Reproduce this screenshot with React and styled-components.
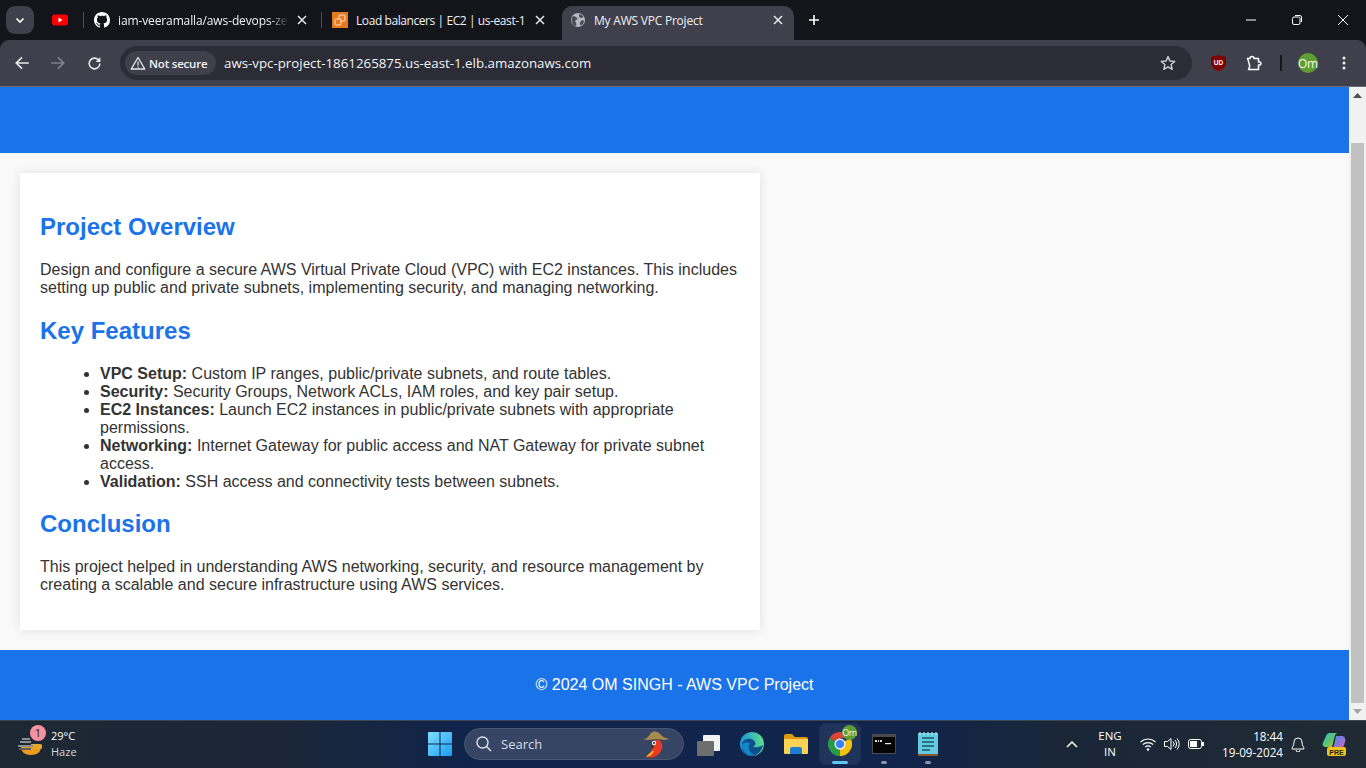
import React from "react";
import styled, { createGlobalStyle } from "styled-components";

const Global = createGlobalStyle`
  html, body { margin: 0; padding: 0; height: 768px; overflow: hidden; }
  * { box-sizing: border-box; }
  #root { width: 1366px; height: 768px; }
`;
const uiFont = `"Open Sans", "Noto Sans", "Liberation Sans", sans-serif`;

const Frame = styled.div`
  width: 1366px; height: 768px; display: flex; flex-direction: column; overflow: hidden;
  font-family: ${uiFont}; background: #14151b;
`;
/* ---- tab strip ---- */
const TabStrip = styled.div`
  height: 40px; flex: none; display: flex; align-items: flex-end; background: #14151b; padding-left: 6px; color: #f1f1f3;
`;
const TabSearch = styled.button`
  width: 28px; height: 28px; margin-bottom: 6px; border: 0; padding: 0; border-radius: 9px; background: #3f404c;
  display: flex; align-items: center; justify-content: center; flex: none; margin-right: 12px;
`;
const PinnedTab = styled.div`
  width: 37px; height: 34px; display: flex; align-items: center; padding-bottom: 6px; padding-left: 6px; flex: none;
`;
const Divider = styled.div`
  width: 1px; height: 16px; margin-bottom: 12px; background: #4d4e5a; flex: none;
`;
const Tab = styled.div`
  height: 34px; width: ${p => p.$w}px; flex: none; display: flex; align-items: center;
  padding: 0 ${p => p.$pr}px 6px ${p => (p.$active ? 9 : 10)}px; gap: ${p => (p.$active ? 9 : 8)}px;
  background: ${p => (p.$active ? "#3f404c" : "transparent")};
  border-radius: ${p => (p.$active ? "10px 10px 0 0" : "0")};
  font-size: 12px; color: #eef0f3;
`;
const TabTitle = styled.span`
  flex: 1; white-space: nowrap; overflow: hidden; letter-spacing: ${p => p.$ls ?? -0.22}px;
  ${p => p.$fade && `mask-image: linear-gradient(90deg, #000 88%, transparent 100%);`}
`;
const NewTab = styled.div`
  width: 40px; height: 34px; flex: none; display: flex; align-items: center; justify-content: center; padding-bottom: 6px;
`;
const WindowControls = styled.div`
  margin-left: auto; display: flex; height: 40px; align-items: center;
`;
const WinBtn = styled.div`
  width: 46px; height: 40px; display: flex; align-items: center; justify-content: center;
`;
/* ---- toolbar ---- */
const Toolbar = styled.div`
  height: 47px; flex: none; display: flex; align-items: center; background: #3f404c; border-radius: 9px 9px 0 0; border-bottom: 1px solid #6a6b75;
  padding: 0 0 0 4px;
`;
const NavBtn = styled.div`
  width: 36px; height: 34px; display: flex; align-items: center; justify-content: center; flex: none;
`;
const Omnibox = styled.div`
  width: 1072px; height: 34px; margin-left: 8px; flex: none; border-radius: 17px; background: #2b2c35; display: flex; align-items: center; padding: 0 16px 0 5px; color: #f2f3f5;
`;
const SecureChip = styled.div`
  height: 24px; width: 91px; border-radius: 12px; background: #3f404c; display: flex; align-items: center; gap: 3px; padding-left: 5px;
  font-size: 11.5px; font-weight: 600; white-space: nowrap; letter-spacing: -0.2px; flex: none;
`;
const UrlText = styled.span`
  margin-left: 8px; font-size: 13.3px; white-space: nowrap; flex: 1;
`;
const Tools = styled.div`
  display: flex; align-items: center; margin-left: 8px;
`;
const ToolBtn = styled.div`
  width: 36px; height: 34px; display: flex; align-items: center; justify-content: center; flex: none;
`;
const ToolSep = styled.div`
  width: 2px; height: 16px; background: #16171c; margin: 0 8px; flex: none;
`;
const Avatar = styled.div`
  width: ${p => p.$s || 20}px; height: ${p => p.$s || 20}px; border-radius: 50%; background: #5f9e34; color: #f2f7ec; font-size: ${p => p.$f || 12}px; display: flex; align-items: center; justify-content: center; flex: none; letter-spacing: -0.3px;
`;
/* ---- viewport ---- */
const Viewport = styled.div`
  flex: 1; min-height: 0; display: flex; background: #f9f9f9; overflow: hidden;
`;
const Page = styled.div`
  flex: 1; min-width: 0; display: flex; flex-direction: column; font-family: "Liberation Sans", Arial, sans-serif; color: #333; font-size: 16px; line-height: 18px;
`;
const Hero = styled.div`
  height: 66px; background: #1a73e8; flex: none;
`;
const Main = styled.div`
  padding: 20px; flex: none;
`;
const Card = styled.section`
  width: 740px; padding: 20px; background: #fff; box-shadow: 0 0 10px rgba(0,0,0,0.1);
`;
const Heading = styled.h2`
  margin: 19.8px 0 20.4px; font-size: 24px; line-height: 27.6px; font-weight: 700; color: #1a73e8;
`;
const Para = styled.p`
  margin: 16px 0;
`;
const List = styled.ul`
  margin: 19.8px 0; padding-left: 60px;
`;
const Foot = styled.footer`
  flex: 1; background: #1a73e8; color: #fff; text-align: center; padding-top: 26px;
`;
const Scrollbar = styled.div`
  width: 17px; flex: none; background: #f1f1f1; display: flex; flex-direction: column;
`;
const ScrollArrow = styled.div`
  height: 17px; flex: none; display: flex; align-items: center; justify-content: center;
`;
const ScrollTrack = styled.div`
  flex: 1; padding: 39px 2px 0; display: flex;
`;
const ScrollThumb = styled.div`
  flex: 1; background: #c1c1c1;
`;
/* ---- taskbar ---- */
const Taskbar = styled.div`
  height: 48px; flex: none; display: flex; align-items: center; color: #fff; border-top: 1px solid #3c4650; padding-bottom: 1px;
  background: linear-gradient(90deg, #1d2833 0%, #1b2738 20%, #10244c 35%, #10244c 65%, #1a2738 78%, #1f2a33 100%);
`;
const Weather = styled.div`
  width: 428px; flex: none; display: flex; align-items: center; padding-left: 18px; gap: 9px; position: relative; font-size: 11px; line-height: 16px;
`;
const WeatherBadge = styled.div`
  position: absolute; left: 30px; top: -3px; width: 16px; height: 16px; border-radius: 50%; background: #f7919d; color: #222; font-size: 11px; display: flex; align-items: center; justify-content: center;
`;
const WeatherText = styled.div`
  display: flex; flex-direction: column;
`;
const Dim = styled.span`
  color: #d4d8dc;
`;
const Apps = styled.div`
  display: flex; align-items: center; flex: none;
`;
const AppSlot = styled.div`
  width: ${p => p.$w || 44}px; height: 40px; display: flex; align-items: center; justify-content: center; position: relative; flex: none; border-radius: 5px;
  ${p => p.$active && `background: rgba(255,255,255,0.07); outline: 1px solid rgba(255,255,255,0.05); width: 40px; margin: 0 2px;`}
`;
const RunDot = styled.div`
  position: absolute; bottom: 0; left: 50%; transform: translateX(-50%); height: 3px; border-radius: 2px;
  width: ${p => (p.$active ? 16 : 6)}px; background: ${p => (p.$active ? "#5ec5f5" : "#8c93a3")};
`;
const SearchBox = styled.div`
  width: 220px; height: 32px; margin: 0 2px 0 12px; border-radius: 16px; background: #374565; border: 1px solid #4a5674; display: flex; align-items: center; padding-left: 11px; gap: 9px; font-size: 13px; color: #d6dbe6; flex: none; position: relative;
`;
const ParrotWrap = styled.div`
  position: absolute; right: 12px; top: 1px;
`;
const AppBadge = styled.div`
  position: absolute; right: 3px; top: 1px;
`;
const Tray = styled.div`
  margin-left: 110px; display: flex; align-items: center; flex: none;
`;
const TraySlot = styled.div`
  width: ${p => p.$w || 24}px; display: flex; align-items: center; justify-content: center; flex: none; margin-left: ${p => p.$ml || 0}px;
`;
const Lang = styled.div`
  width: 48px; margin-left: 2px; text-align: center; font-size: 11.5px; line-height: 16px;
`;
const Clock = styled.div`
  width: 75px; text-align: right; font-size: 11.7px; line-height: 16px; flex: none; white-space: nowrap;
`;

/* ---- drawn icons ---- */
const Chev = () => <svg width="12" height="12" viewBox="0 0 12 12"><path d="M2.5 4.5 6 8l3.5-3.5" fill="none" stroke="#fff" strokeWidth="1.6" /></svg>;
const YouTube = () => <svg width="16" height="12" viewBox="0 0 16 12"><rect width="16" height="11" y=".5" rx="3" fill="#f00" /><path d="M6.5 3.5v5l4-2.5z" fill="#fff" /></svg>;
const GitHub = () => <svg width="16" height="16" viewBox="0 0 16 16"><path fill="#fff" d="M8 0C3.58 0 0 3.58 0 8c0 3.54 2.29 6.53 5.47 7.59.4.07.55-.17.55-.38 0-.19-.01-.82-.01-1.49-2.01.37-2.53-.49-2.69-.94-.09-.23-.48-.94-.82-1.13-.28-.15-.68-.52-.01-.53.63-.01 1.08.58 1.23.82.72 1.21 1.87.87 2.33.66.07-.52.28-.87.51-1.07-1.78-.2-3.64-.89-3.64-3.95 0-.87.31-1.59.82-2.15-.08-.2-.36-1.02.08-2.12 0 0 .67-.21 2.2.82.64-.18 1.32-.27 2-.27s1.36.09 2 .27c1.53-1.04 2.2-.82 2.2-.82.44 1.1.16 1.92.08 2.12.51.56.82 1.27.82 2.15 0 3.07-1.87 3.75-3.65 3.95.29.25.54.73.54 1.48 0 1.07-.01 1.93-.01 2.2 0 .21.15.46.55.38A8.01 8.01 0 0 0 16 8c0-4.42-3.58-8-8-8z" /></svg>;
const AwsIcon = () => <svg width="16" height="16" viewBox="0 0 16 16"><rect width="16" height="16" fill="#e8791c" /><rect x="7" y="3" width="6" height="6" rx="1" fill="none" stroke="#fbe3cc" strokeWidth="1" /><rect x="3" y="7" width="6" height="6" rx="1" fill="#e8791c" stroke="#fbe3cc" strokeWidth="1" /></svg>;
const Globe = () => <svg width="14" height="14" viewBox="0 0 14 14"><circle cx="7" cy="7" r="7" fill="#b7b9c0" /><path d="M2 3c2 0 3 1 4 2s0 2-1 2-1 2 0 3 0 3-1 3C2 12 0 9 1 5zM9 1c1 1 2 1 3 2s-1 2-2 2-2-1-2-2 0-2 1-2zM10 8c1-1 3-1 3 0s-1 3-2 4-2 0-2-1 0-2 1-3z" fill="#4a4b57" /></svg>;
const Close = ({ c = "#e8e9ec" }) => <svg width="10" height="10" viewBox="0 0 10 10" style={{ flex: "none" }}><path d="M1 1l8 8M9 1 1 9" stroke={c} strokeWidth="1.5" /></svg>;
const Plus = () => <svg width="12" height="12" viewBox="0 0 12 12"><path d="M6 1v10M1 6h10" stroke="#fff" strokeWidth="1.6" /></svg>;
const Back = ({ c = "#e8e9ec", flip }) => <svg width="16" height="16" viewBox="0 0 14 14" style={flip ? { transform: "scaleX(-1)" } : undefined}><path d="M13 7H2M7 2 2 7l5 5" fill="none" stroke={c} strokeWidth="1.5" /></svg>;
const Reload = () => <svg width="15" height="15" viewBox="0 0 14 14"><path d="M12 7a5 5 0 1 1-1.5-3.6L12 5" fill="none" stroke="#e8e9ec" strokeWidth="1.5" /><path d="M12.5 1v4.5H8z" fill="#e8e9ec" /></svg>;
const Warn = () => <svg width="16" height="14" viewBox="0 0 16 14"><path d="M8 1.5 1.2 13h13.6z" fill="none" stroke="#e8e9ec" strokeWidth="1.3" strokeLinejoin="round" /><path d="M8 5.5v4M8 10.5v1.3" stroke="#e8e9ec" strokeWidth="1.2" /></svg>;
const Star = () => <svg width="16" height="16" viewBox="0 0 16 16"><path d="M8 1.6 9.9 6l4.8.4-3.6 3.2 1.1 4.7L8 11.8l-4.2 2.5 1.1-4.7L1.3 6.4 6.1 6z" fill="none" stroke="#cfd0d5" strokeWidth="1.4" strokeLinejoin="round" /></svg>;
const Shield = () => <svg width="15" height="16" viewBox="0 0 15 16"><path d="M7.5 0 15 2v6c0 4-3.5 6.5-7.5 8C3.500 14.500 0 12 0 8V2z" fill="#800000" /><text x="7.500" y="10" fontSize="6.500" fontWeight="700" textAnchor="middle" fill="#fff" fontFamily="Liberation Sans">UD</text></svg>;
const Puzzle = () => <svg width="16" height="16" viewBox="0 0 16 16"><path d="M1.500 3.500h2.500a2 2 0 0 1 4 0h4.500v3.500h1a1.500 1.500 0 0 1 0 3h-1v4.500H2.500c1-1.500 1.500-3 1-4.500S2.500 5.500 1.500 3.500z" fill="none" stroke="#fff" strokeWidth="1.500" strokeLinejoin="round" /></svg>;
const Dots = () => <svg width="4" height="14" viewBox="0 0 4 14"><circle cx="2" cy="2" r="1.500" fill="#eee" /><circle cx="2" cy="7" r="1.500" fill="#eee" /><circle cx="2" cy="12" r="1.500" fill="#eee" /></svg>;
const Minimize = () => <svg width="10" height="10" viewBox="0 0 10 10"><path d="M0 5h10" stroke="#fff" /></svg>;
const Restore = () => <svg width="10" height="10" viewBox="0 0 10 10"><rect x=".5" y="2" width="7.500" height="7.500" rx="1.500" fill="none" stroke="#fff" /><path d="M3 .5h5a1.500 1.500 0 0 1 1.500 1.500v5" fill="none" stroke="#fff" /></svg>;
const CloseThin = () => <svg width="10" height="10" viewBox="0 0 10 10"><path d="M0 0l10 10M10 0 0 10" stroke="#fff" /></svg>;
const Tri = ({ down, c }) => <svg width="9" height="5" viewBox="0 0 9 5">{down ? <path d="M0 0h9L4.500 5z" fill={c} /> : <path d="M0 5h9L4.500 0z" fill={c} />}</svg>;

const HazeIcon = () => <svg width="24" height="24" viewBox="0 0 24 24"><path d="M3 15h20c0 5-4 8-10 8S3 20 3 15z" fill="#f09a1a" /><path d="M13 12h9a2 2 0 0 1 0 5h-9z" fill="#e8a52a" /><path d="M4 7h8M2 10h11M0 14h15" stroke="#8a8f94" strokeWidth="2" /><path d="M1 17h12" stroke="#5c5f60" strokeWidth="2" /></svg>;
const WinLogo = () => <svg width="24" height="24" viewBox="0 0 24 24"><defs><linearGradient id="w" x1="0" y1="0" x2="1" y2="1"><stop offset="0" stopColor="#7fe0ff" /><stop offset="1" stopColor="#1a9cf0" /></linearGradient></defs><path fill="url(#w)" d="M0 1a1 1 0 0 1 1-1h10.500v11.500H0zM12.500 0H23a1 1 0 0 1 1 1v10.500H12.500zM0 12.500h11.500V24H1a1 1 0 0 1-1-1zM12.500 12.500H24V23a1 1 0 0 1-1 1H12.500z" /></svg>;
const SearchGlass = () => <svg width="16" height="16" viewBox="0 0 16 16"><circle cx="6.500" cy="6.500" r="5.500" fill="none" stroke="#dfe3ea" strokeWidth="1.400" /><path d="M10.500 10.500 15 15" stroke="#dfe3ea" strokeWidth="1.400" /></svg>;
const Parrot = () => <svg width="28" height="28" viewBox="0 0 28 28"><path d="M12 10c5-1 8 2 7 8-1 4-4 8-8 9-2 .5-6 1-8 0 3-2 5-5 6-8 .5-3 1-7 3-9z" fill="#e83a22" /><path d="M3 27c2-3 5-5 8-7-1 4-3 6-8 7z" fill="#f4b520" /><path d="M0 9c4 0 5-2 8-6 2-2 5-2 8 0 3 3 5 5 10 6-5 2-8 0-12 0S5 11 0 9z" fill="#a88a4a" /><circle cx="11" cy="13" r="2.200" fill="#eee" /><circle cx="11" cy="13" r="1" fill="#222" /><path d="M10 15c-2 0-2 2-1 4l2-2z" fill="#333" /></svg>;
const TaskView = () => <svg width="24" height="24" viewBox="0 0 24 24"><rect x="7" y="3" width="17" height="16" rx="1" fill="#f2f2f2" /><rect x="1" y="9" width="17" height="15" rx="1" fill="#6e6e6e" /></svg>;
const Edge = () => <svg width="24" height="24" viewBox="0 0 24 24"><defs><linearGradient id="e1" x1="0" y1="0" x2="1" y2="0"><stop offset="0" stopColor="#1596d6" /><stop offset="1" stopColor="#5fe08a" /></linearGradient></defs><circle cx="12" cy="12" r="12" fill="url(#e1)" /><path d="M2 13c0-5 5-7 9-6s6 5 3 7c-1 1-3 0-3-1 4 4 9 2 12 0-1 6-6 11-12 11C5 24 1 19 2 13z" fill="#0e4f8e" /><path d="M10 12c-3 3-1 9 4 11-6 2-12-3-12-10 2-3 6-4 8-1z" fill="#1487c9" /></svg>;
const Folder = () => <svg width="24" height="24" viewBox="0 0 24 24"><path d="M0 4a2 2 0 0 1 2-2h6l3 3h11a2 2 0 0 1 2 2v4H0z" fill="#d99a0f" /><path d="M0 7h24v14a1 1 0 0 1-1 1H1a1 1 0 0 1-1-1z" fill="#fbd354" /><path d="M6 22v-5a2 2 0 0 1 2-2h8a2 2 0 0 1 2 2v5z" fill="#1b7fd0" /></svg>;
const Chrome = () => <svg width="24" height="24" viewBox="0 0 24 24"><path d="M12 12 1.600 6A12 12 0 0 1 22.400 6H12z" fill="#db4437" /><path d="M12 12 22.400 6A12 12 0 0 1 12 24z" fill="#f4c20d" /><path d="M12 12v12A12 12 0 0 1 1.600 6z" fill="#2a9a48" /><circle cx="12" cy="12" r="5.500" fill="#fff" /><circle cx="12" cy="12" r="4.300" fill="#3b82ee" /></svg>;
const Terminal = () => <svg width="24" height="20" viewBox="0 0 24 20"><rect width="24" height="20" fill="#4a4a4a" /><rect x="1" y="3" width="22" height="16" fill="#050505" /><path d="M3 6h2v2H3zM6 6h1v2H6zM8 6h2v2H8z" fill="#ddd" /><rect x="13" y="9" width="6" height="1.200" fill="#eee" /></svg>;
const Notepad = () => <svg width="20" height="24" viewBox="0 0 20 24"><rect y="1" width="20" height="23" rx="1" fill="#8a5a2a" /><rect y="1" width="20" height="21" rx="1" fill="#63cbe0" /><path d="M4 6h12M4 10h12M4 14h12M4 18h8" stroke="#17566a" strokeWidth="1.500" /><path d="M2 0v3M6 0v3M10 0v3M14 0v3M18 0v3" stroke="#cfeef5" /></svg>;
const Caret = () => <svg width="12" height="8" viewBox="0 0 12 8"><path d="M1 7 6 2l5 5" fill="none" stroke="#fff" strokeWidth="1.500" /></svg>;
const Wifi = () => <svg width="16" height="14" viewBox="0 0 16 14"><path d="M.5 5a11 11 0 0 1 15 0M2.800 7.500a8 8 0 0 1 10.400 0M5.200 10a4.400 4.400 0 0 1 5.600 0" fill="none" stroke="#fff" strokeWidth="1.100" /><circle cx="8" cy="12.500" r="1.200" fill="#fff" /></svg>;
const Sound = () => <svg width="16" height="14" viewBox="0 0 16 14"><path d="M.5 4.500h3L7 1.500v11l-3.500-3h-3z" fill="none" stroke="#fff" /><path d="M9 4.500a3.500 3.500 0 0 1 0 5M11 3a6 6 0 0 1 0 8M13 1.500a8 8 0 0 1 0 11" fill="none" stroke="#fff" /></svg>;
const Battery = () => <svg width="16" height="10" viewBox="0 0 16 10"><rect x=".5" y=".5" width="13" height="9" rx="2" fill="none" stroke="#fff" /><rect x="2" y="2" width="7" height="6" fill="#fff" /><rect x="14" y="3" width="2" height="4" fill="#fff" /></svg>;
const Bell = () => <svg width="14" height="15" viewBox="0 0 14 15"><path d="M7 1a4 4 0 0 0-4 4c0 4-2 5-2 7h12c0-2-2-3-2-7a4 4 0 0 0-4-4zM5 13a2 2 0 0 0 4 0" fill="none" stroke="#fff" /></svg>;
const Copilot = () => <svg width="24" height="24" viewBox="0 0 24 24"><defs><linearGradient id="cp" x1="0" y1="0" x2="1" y2="1"><stop offset="0" stopColor="#3fb7f0" /><stop offset=".5" stopColor="#56c46a" /><stop offset="1" stopColor="#e8c020" /></linearGradient><linearGradient id="cq" x1="0" y1="0" x2="1" y2="1"><stop offset="0" stopColor="#3a8ee8" /><stop offset="1" stopColor="#e060c0" /></linearGradient></defs><path d="M8 1h8c-2 0-3 2-3.500 4L10 15H3.500C1 15 0 13 .8 11L4 4c.8-2 2-3 4-3z" fill="url(#cp)" /><path d="M14 4h6c2.500 0 4 3 3 6l-2 6c-.5 1-1 1.500-2 1.500H11z" fill="url(#cq)" /><rect x="5" y="15" width="19" height="9" rx="2" fill="#f3c318" /><text x="14.500" y="22.500" fontSize="7" fontWeight="700" textAnchor="middle" fill="#222" fontFamily="Liberation Sans">PRE</text></svg>;

export default function App() {
  return (
    <Frame>
      <Global />
      <TabStrip>
        <TabSearch><Chev /></TabSearch>
        <PinnedTab><YouTube /></PinnedTab>
        <Divider />
        <Tab $w={237} $pr={14}>
          <GitHub />
          <TabTitle $fade $ls={-0.12}>iam-veeramalla/aws-devops-zero-to-hero</TabTitle>
          <Close />
        </Tab>
        <Divider />
        <Tab $w={240} $pr={17}>
          <AwsIcon />
          <TabTitle $ls={-0.42}>Load balancers | EC2 | us-east-1</TabTitle>
          <Close />
        </Tab>
        <Tab $w={232} $pr={11} $active>
          <Globe />
          <TabTitle>My AWS VPC Project</TabTitle>
          <Close />
        </Tab>
        <NewTab><Plus /></NewTab>
        <WindowControls>
          <WinBtn><Minimize /></WinBtn>
          <WinBtn><Restore /></WinBtn>
          <WinBtn><CloseThin /></WinBtn>
        </WindowControls>
      </TabStrip>
      <Toolbar>
        <NavBtn><Back /></NavBtn>
        <NavBtn><Back c="#7f808a" flip /></NavBtn>
        <NavBtn><Reload /></NavBtn>
        <Omnibox>
          <SecureChip><Warn />Not secure</SecureChip>
          <UrlText>aws-vpc-project-1861265875.us-east-1.elb.amazonaws.com</UrlText>
          <Star />
        </Omnibox>
        <Tools>
          <ToolBtn><Shield /></ToolBtn>
          <ToolBtn><Puzzle /></ToolBtn>
          <ToolSep />
          <ToolBtn><Avatar>Om</Avatar></ToolBtn>
          <ToolBtn><Dots /></ToolBtn>
        </Tools>
      </Toolbar>
      <Viewport>
        <Page>
          <Hero />
          <Main>
            <Card>
              <Heading>Project Overview</Heading>
              <Para>Design and configure a secure AWS Virtual Private Cloud (VPC) with EC2 instances. This includes setting up public and private subnets, implementing security, and managing networking.</Para>
              <Heading>Key Features</Heading>
              <List>
                <li><strong>VPC Setup:</strong> Custom IP ranges, public/private subnets, and route tables.</li>
                <li><strong>Security:</strong> Security Groups, Network ACLs, IAM roles, and key pair setup.</li>
                <li><strong>EC2 Instances:</strong> Launch EC2 instances in public/private subnets with appropriate permissions.</li>
                <li><strong>Networking:</strong> Internet Gateway for public access and NAT Gateway for private subnet access.</li>
                <li><strong>Validation:</strong> SSH access and connectivity tests between subnets.</li>
              </List>
              <Heading>Conclusion</Heading>
              <Para>This project helped in understanding AWS networking, security, and resource management by creating a scalable and secure infrastructure using AWS services.</Para>
            </Card>
          </Main>
          <Foot>© 2024 OM SINGH - AWS VPC Project</Foot>
        </Page>
        <Scrollbar>
          <ScrollArrow><Tri c="#505050" /></ScrollArrow>
          <ScrollTrack><ScrollThumb /></ScrollTrack>
          <ScrollArrow><Tri down c="#a3a3a3" /></ScrollArrow>
        </Scrollbar>
      </Viewport>
      <Taskbar>
        <Weather>
          <HazeIcon />
          <WeatherBadge>1</WeatherBadge>
          <WeatherText><span>29°C</span><Dim>Haze</Dim></WeatherText>
        </Weather>
        <Apps>
          <AppSlot $w={24}><WinLogo /></AppSlot>
          <SearchBox>
            <SearchGlass />
            <span>Search</span>
            <ParrotWrap><Parrot /></ParrotWrap>
          </SearchBox>
          <AppSlot><TaskView /></AppSlot>
          <AppSlot><Edge /></AppSlot>
          <AppSlot><Folder /></AppSlot>
          <AppSlot $active>
            <Chrome />
            <AppBadge><Avatar $s={15} $f={9}>Om</Avatar></AppBadge>
            <RunDot $active />
          </AppSlot>
          <AppSlot><Terminal /><RunDot /></AppSlot>
          <AppSlot><Notepad /><RunDot /></AppSlot>
        </Apps>
        <Tray>
          <TraySlot><Caret /></TraySlot>
          <Lang>ENG<br />IN</Lang>
          <TraySlot $ml={2}><Wifi /></TraySlot>
          <TraySlot><Sound /></TraySlot>
          <TraySlot><Battery /></TraySlot>
          <Clock>18:44<br />19-09-2024</Clock>
          <TraySlot $ml={3}><Bell /></TraySlot>
          <TraySlot $ml={12} $w={24}><Copilot /></TraySlot>
        </Tray>
      </Taskbar>
    </Frame>
  );
}
